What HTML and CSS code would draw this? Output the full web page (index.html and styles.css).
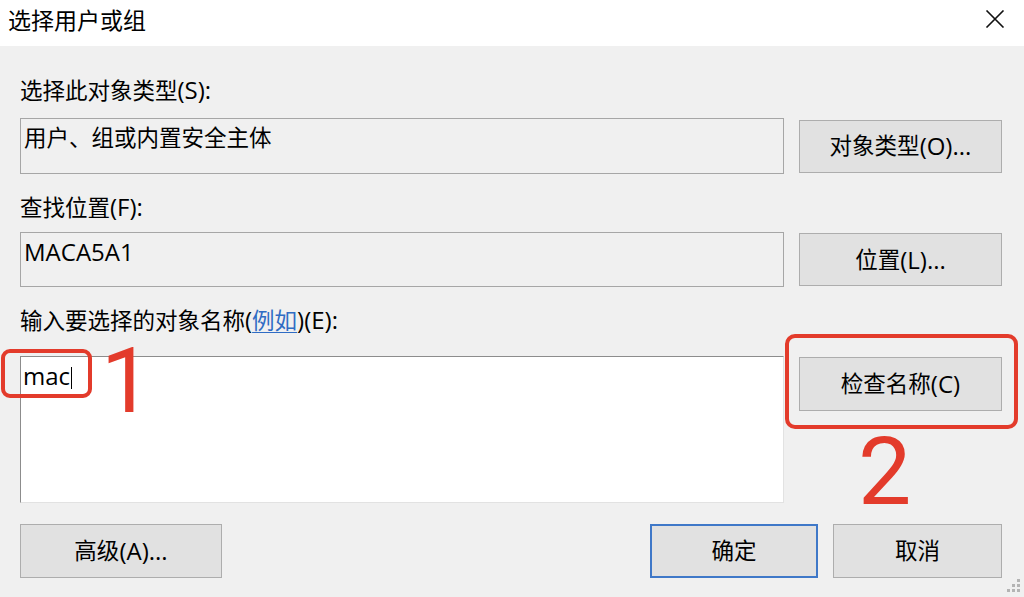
FILE: index.html
```html
<!DOCTYPE html>
<html lang="zh-CN">
<head>
<meta charset="utf-8">
<title>选择用户或组</title>
<link rel="stylesheet" href="styles.css">
</head>
<body>
<div class="titlebar">
  <span class="title">选择用户或组</span>
  <svg class="close" viewBox="0 0 20 18" aria-hidden="true"><path d="M1.5 0.5 L18.5 17.5 M18.5 0.5 L1.5 17.5" stroke="#111" stroke-width="1.6" fill="none"/></svg>
</div>
<div class="content">
  <div class="label label-1">选择此对象类型<span class="en">(S):</span></div>
  <div class="row row-1">
    <div class="field field-1">用户、组或内置安全主体</div>
    <div class="btn">对象类型<span class="en">(O)...</span></div>
  </div>
  <div class="label label-2">查找位置<span class="en">(F):</span></div>
  <div class="row row-2">
    <div class="field field-2"><span class="en">MACA5A1</span></div>
    <div class="btn">位置<span class="en">(L)...</span></div>
  </div>
  <div class="label label-3">输入要选择的对象名称<span class="en">(</span><a class="link">例如</a><span class="en">)(E):</span></div>
  <div class="row row-3">
    <div class="textarea"><span class="en">mac</span><span class="caret"></span></div>
    <div class="btn btn-check">检查名称<span class="en">(C)</span></div>
  </div>
  <div class="bottom">
    <div class="btn btn-adv">高级<span class="en">(A)...</span></div>
    <div class="actions">
      <div class="btn btn-ok">确定</div>
      <div class="btn btn-cancel">取消</div>
    </div>
  </div>
</div>
<div class="mark mark-box-1"></div>
<div class="mark mark-box-2"></div>
<div class="mark-num num-1">1</div>
<div class="mark-num num-2">2</div>
<svg class="grip" viewBox="0 0 16 16" aria-hidden="true">
  <rect x="12" y="1" width="3" height="3" fill="#b4b4b4"/>
  <rect x="7" y="6" width="3" height="3" fill="#b4b4b4"/>
  <rect x="12" y="6" width="3" height="3" fill="#b4b4b4"/>
  <rect x="2" y="11" width="3" height="3" fill="#b4b4b4"/>
  <rect x="7" y="11" width="3" height="3" fill="#b4b4b4"/>
  <rect x="12" y="11" width="3" height="3" fill="#b4b4b4"/>
</svg>
</body>
</html>
```
FILE: styles.css
```css
html, body {
  margin: 0;
  padding: 0;
}
body {
  width: 1024px;
  height: 597px;
  background: #f0f0f0;
  font-family: "Open Sans", "Noto Sans CJK SC", sans-serif;
  font-size: 22.5px;
  color: #000;
  position: relative;
  overflow: hidden;
}
.en {
  font-size: 24px;
}
.titlebar {
  height: 46px;
  background: #fff;
  display: flex;
  justify-content: space-between;
  align-items: flex-start;
  padding: 5px 19px 0 8px;
  box-sizing: border-box;
}
.title {
  font-size: 23px;
  line-height: 30px;
}
.close {
  width: 20px;
  height: 18px;
  margin-top: 5px;
}
.content {
  display: flex;
  flex-direction: column;
  padding: 0 22px 0 20px;
}
.label {
  height: 30px;
  line-height: 30px;
  white-space: nowrap;
}
.label-1 { margin-top: 29px; }
.label-2 { margin-top: 18px; }
.label-3 { margin-top: 18px; }
.link {
  color: #2f6cc4;
  text-decoration: underline;
  text-underline-offset: 3px;
  text-decoration-thickness: 1px;
}
.row {
  display: grid;
  grid-template-columns: 764px 203px;
  column-gap: 15px;
  align-items: center;
}
.row-1 { margin-top: 13px; }
.row-2 { margin-top: 10px; }
.row-3 { margin-top: 21px; align-items: start; }
.field {
  box-sizing: border-box;
  border: 1px solid #a6a6a6;
  padding: 4px 3px 0;
  line-height: 30px;
  white-space: nowrap;
}
.field-1 { height: 56px; }
.field-2 { height: 55px; }
.textarea {
  box-sizing: border-box;
  height: 147px;
  background: #fff;
  border-top: 1px solid #8c8c8c;
  border-left: 1px solid #8c8c8c;
  border-right: 1px solid #e2e2e2;
  border-bottom: 1px solid #e2e2e2;
  padding: 4px 2px 0;
  line-height: 30px;
}
.caret {
  display: inline-block;
  width: 1px;
  height: 22px;
  background: #000;
  vertical-align: -4px;
  margin-left: 1px;
}
.btn {
  box-sizing: border-box;
  height: 53px;
  background: #e1e1e1;
  border: 1px solid #adadad;
  display: flex;
  align-items: center;
  justify-content: center;
  line-height: 30px;
  white-space: nowrap;
}
.btn-check {
  margin-top: 1px;
  height: 54px;
}
.bottom {
  margin-top: 21px;
  display: flex;
  justify-content: space-between;
}
.btn-adv {
  width: 202px;
  height: 54px;
}
.actions {
  display: flex;
  gap: 15px;
}
.btn-ok {
  width: 168px;
  height: 54px;
  border: 2px solid #3f78c8;
}
.btn-cancel {
  width: 169px;
  height: 54px;
}
.mark {
  position: absolute;
  box-sizing: border-box;
  border: 4px solid #e33b2b;
}
.mark-box-1 {
  left: 1px;
  top: 349px;
  width: 91px;
  height: 49px;
  border-radius: 9px;
}
.mark-box-2 {
  left: 785px;
  top: 334px;
  width: 233px;
  height: 95px;
  border-radius: 10px;
}
.mark-num {
  position: absolute;
  color: #e33b2b;
  font-family: Roboto, sans-serif;
  line-height: 0.72;
}
.num-1 {
  font-size: 91px;
  left: 101px;
  top: 349px;
}
.num-2 {
  font-size: 95px;
  left: 858px;
  top: 438px;
}
.grip {
  position: absolute;
  right: 3px;
  bottom: 3px;
  width: 16px;
  height: 16px;
}
```
